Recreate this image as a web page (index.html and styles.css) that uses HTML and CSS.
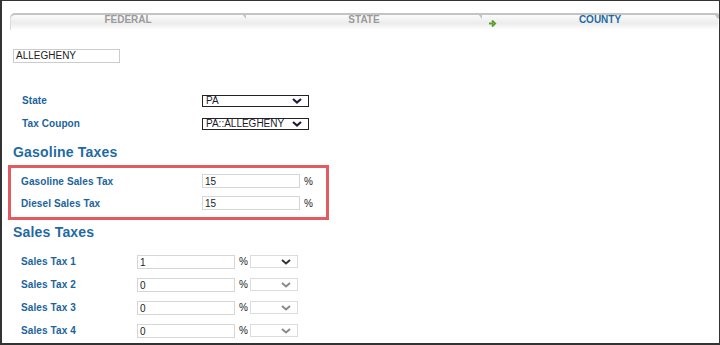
FILE: index.html
```html
<!DOCTYPE html>
<html lang="en">
  <head>
    <meta charset="UTF-8" />
    <title>County Taxes</title>
    <link rel="stylesheet" href="styles.css">
  </head>
  <body>
    <div class="frame">
      <div class="tabs">
        <div class="tab first">FEDERAL</div>
        <div class="tab">STATE</div>
        <div class="tab active">
          <svg class="tab-arrow" width="8" height="7" viewBox="0 0 8 7">
            <path d="M0 3.5h4M3 0.5l3 3-3 3" fill="none" stroke="#5a9e2a" stroke-width="2"/>
          </svg>
          COUNTY
        </div>
      </div>

      <div class="county-name">ALLEGHENY</div>

      <div class="rows top-rows">
        <div class="row">
          <span class="label">State</span>
          <div class="select">
            <span>PA</span>
            <svg width="10" height="6" viewBox="0 0 10 6"><path d="M1 1l4 3.5L9 1" fill="none" stroke="#1c1c3c" stroke-width="2.2"/></svg>
          </div>
        </div>
        <div class="row">
          <span class="label">Tax Coupon</span>
          <div class="select">
            <span>PA::ALLEGHENY</span>
            <svg width="10" height="6" viewBox="0 0 10 6"><path d="M1 1l4 3.5L9 1" fill="none" stroke="#1c1c3c" stroke-width="2.2"/></svg>
          </div>
        </div>
      </div>

      <h2 class="section">Gasoline Taxes</h2>
      <div class="highlight">
        <div class="row gas-row">
          <span class="label">Gasoline Sales Tax</span>
          <div class="field">15</div>
          <span class="pct">%</span>
        </div>
        <div class="row gas-row">
          <span class="label">Diesel Sales Tax</span>
          <div class="field">15</div>
          <span class="pct">%</span>
        </div>
      </div>

      <h2 class="section sales-title">Sales Taxes</h2>
      <div class="rows sales-rows">
        <div class="row sales-row">
          <span class="label">Sales Tax 1</span>
          <div class="field">1</div>
          <span class="pct">%</span>
          <div class="mini-select">
            <svg width="10" height="6" viewBox="0 0 10 6"><path d="M1 1l4 3.5L9 1" fill="none" stroke="#333" stroke-width="2"/></svg>
          </div>
        </div>
        <div class="row sales-row">
          <span class="label">Sales Tax 2</span>
          <div class="field">0</div>
          <span class="pct">%</span>
          <div class="mini-select">
            <svg width="10" height="6" viewBox="0 0 10 6"><path d="M1 1l4 3.5L9 1" fill="none" stroke="#8a8a8a" stroke-width="2"/></svg>
          </div>
        </div>
        <div class="row sales-row">
          <span class="label">Sales Tax 3</span>
          <div class="field">0</div>
          <span class="pct">%</span>
          <div class="mini-select">
            <svg width="10" height="6" viewBox="0 0 10 6"><path d="M1 1l4 3.5L9 1" fill="none" stroke="#8a8a8a" stroke-width="2"/></svg>
          </div>
        </div>
        <div class="row sales-row">
          <span class="label">Sales Tax 4</span>
          <div class="field">0</div>
          <span class="pct">%</span>
          <div class="mini-select">
            <svg width="10" height="6" viewBox="0 0 10 6"><path d="M1 1l4 3.5L9 1" fill="none" stroke="#8a8a8a" stroke-width="2"/></svg>
          </div>
        </div>
      </div>
    </div>
  </body>
</html>
```

FILE: styles.css
```css
body {
  margin: 0;
  font-family: "Liberation Sans", Arial, sans-serif;
  background: #ffffff;
}
.frame {
  width: 720px;
  height: 345px;
  box-sizing: border-box;
  border: 1px solid #333333;
  border-left-width: 2px;
  border-bottom-width: 2px;
  overflow: hidden;
}

/* Tabs */
.tabs {
  display: flex;
  margin: 12px 1px 0 8px;
}
.tab {
  position: relative;
  flex: 1;
  height: 15px;
  border-top: 2px solid #c4c4c4;
  background: linear-gradient(#fbfbfb, #ececec 55%, #ffffff);
  text-align: center;
  font-size: 10px;
  font-weight: bold;
  line-height: 10px;
  color: #9a9a9a;
}
.tab.first {
  border-top-left-radius: 5px;
  box-shadow: inset 1px 0 0 #dcdcdc;
}
.tab::after {
  content: "";
  position: absolute;
  right: -4px;
  top: -1px;
  border-left: 4px solid transparent;
  border-right: 4px solid transparent;
  border-top: 5px solid #c4c4c4;
}
.tab.active {
  color: #1f6aa3;
}
.tab-arrow {
  position: absolute;
  left: 7px;
  top: 5px;
}

/* Form */
.county-name {
  width: 103px;
  height: 12px;
  margin: 19px 0 0 11px;
  border: 1px solid #cccccc;
  padding-left: 2px;
  font-size: 10px;
  line-height: 12px;
  color: #222222;
}
.rows {
  display: flex;
  flex-direction: column;
}
.row {
  display: flex;
  align-items: center;
}
.label {
  font-size: 10px;
  font-weight: bold;
  color: #1b639c;
  letter-spacing: 0.1px;
}
.top-rows {
  margin-top: 26px;
  padding-left: 20px;
}
.top-rows .row {
  height: 23px;
}
.top-rows .label {
  width: 180px;
}
.select {
  display: flex;
  align-items: center;
  justify-content: space-between;
  width: 96px;
  height: 10px;
  border: 1px solid #222222;
  padding-left: 3px;
  padding-right: 6px;
  font-size: 10px;
  color: #1a1a2e;
}
.section {
  margin: 8px 0 0 11px;
  font-size: 14px;
  line-height: 18px;
  font-weight: bold;
  letter-spacing: 0.2px;
  color: #1f6aa3;
}
.highlight {
  width: 305px;
  margin: 4px 0 0 6px;
  padding: 2px 0 3px 10px;
  border: 3px solid #e35b60;
}
.gas-row {
  height: 22px;
}
.gas-row .label {
  width: 181px;
}
.field {
  width: 94px;
  height: 12px;
  border: 1px solid #d6d6d6;
  padding-left: 2px;
  font-size: 10px;
  line-height: 13px;
  color: #222222;
}
.pct {
  margin-left: 4px;
  font-size: 10px;
  color: #222222;
}
.sales-title {
  margin-top: 3px;
}
.sales-rows {
  margin-top: 9px;
  padding-left: 19px;
}
.sales-row {
  height: 23px;
}
.sales-row .label {
  width: 116px;
}
.mini-select {
  display: flex;
  align-items: center;
  justify-content: flex-end;
  width: 40px;
  height: 11px;
  margin-left: 2px;
  padding-right: 6px;
  border: 1px solid #dcdcdc;
}
```
